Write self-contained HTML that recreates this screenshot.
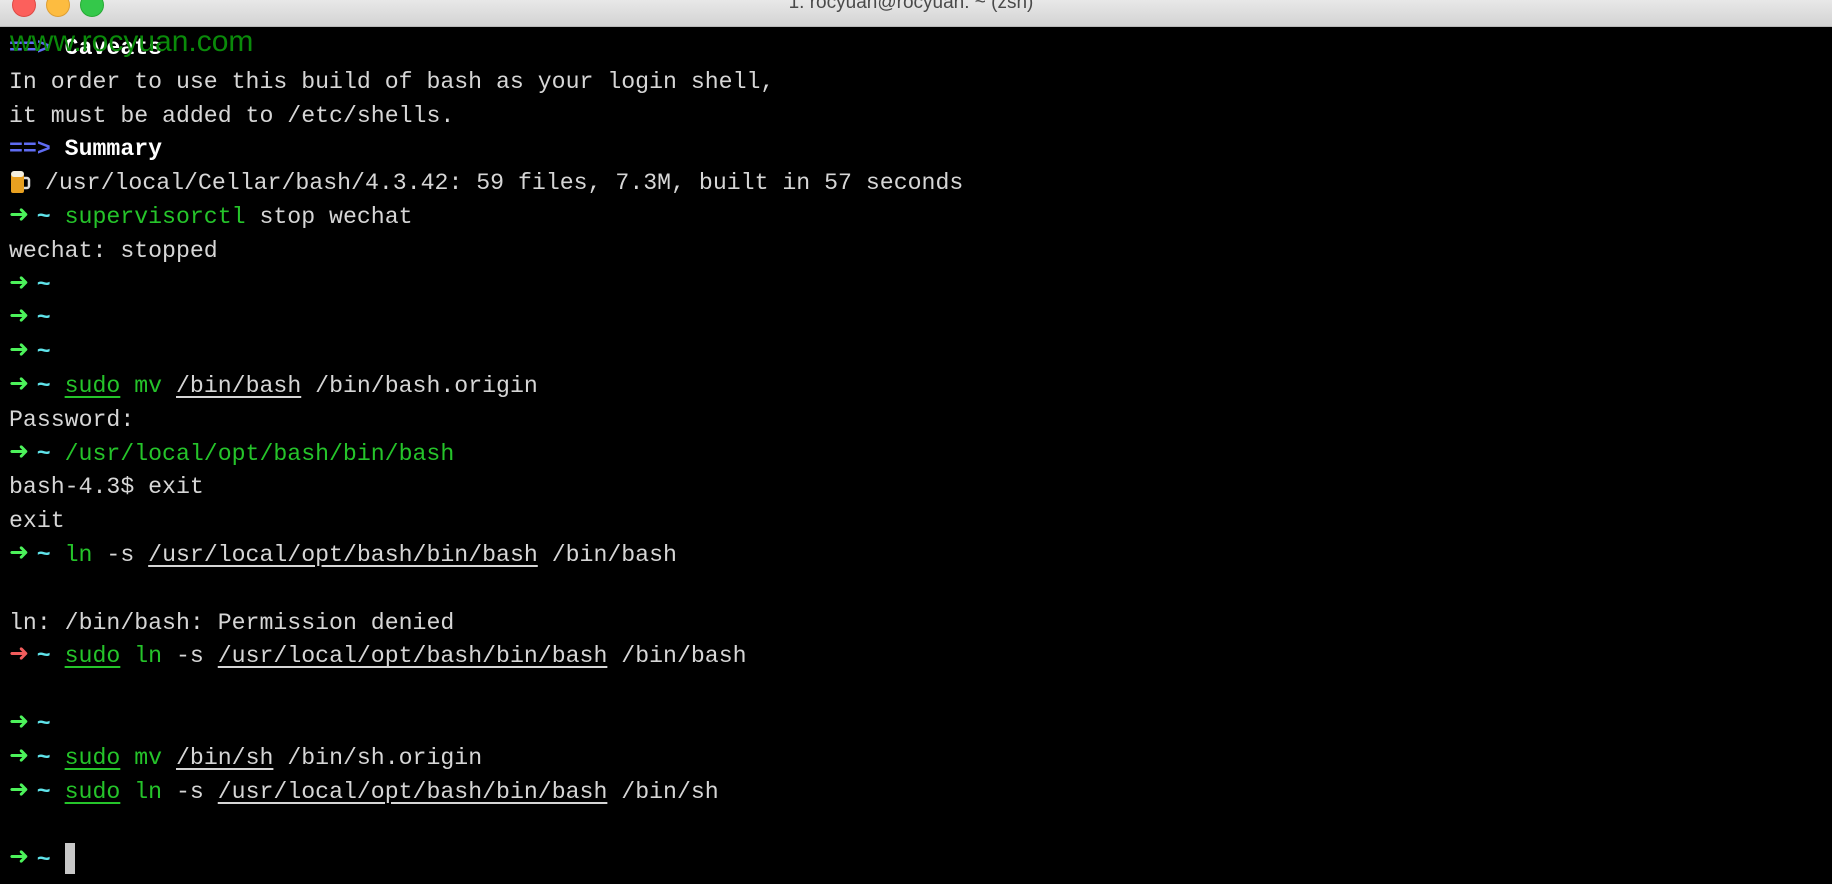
<!DOCTYPE html>
<html><head><meta charset="utf-8"><style>
html,body{margin:0;padding:0;background:#000;width:1832px;height:884px;overflow:hidden;}
.bar{position:absolute;left:0;top:0;width:1832px;height:26px;background:linear-gradient(#e8e8e8,#d3d3d3);border-bottom:1px solid #b8b8b8;overflow:hidden;}
.dot{position:absolute;top:-7px;width:22px;height:22px;border-radius:50%;}
.title{position:absolute;left:0;right:0;top:-8px;text-align:center;font:19px "Liberation Sans",sans-serif;color:#4a4a4a;padding-right:10px;}
.term{position:absolute;left:9px;top:32px;font-family:"Liberation Mono","DejaVu Sans Mono",monospace;font-size:23.2px;color:#d6d6d6;}
.l{height:33.8px;line-height:33.8px;white-space:pre;overflow:hidden;}
.a{display:inline-block;width:27.8px;height:33.8px;line-height:33.8px;vertical-align:top;position:relative;top:-3px;font-family:"DejaVu Sans",sans-serif;font-weight:bold;color:#4cf25a;font-size:24px;}
.r{color:#f25c5c;}
.t{color:#5fe3ea;font-weight:bold;}
.g{color:#25c42a;}
.u{text-decoration:underline;text-decoration-thickness:2px;text-underline-offset:4px;}
.b{color:#fff;font-weight:bold;}
.bl{color:#5f6cf2;font-weight:bold;}
.wm{position:absolute;left:10px;top:25px;font:30px "Liberation Sans",sans-serif;color:#0a8a0a;}
.cur{display:inline-block;width:10px;height:31px;background:#c8c8c8;vertical-align:-8px;}
</style></head><body>
<div class="bar">
<div class="dot" style="left:12px;background:#fc605c;border:1px solid #de4a45"></div>
<div class="dot" style="left:46px;background:#fdbc40;border:1px solid #de9f34"></div>
<div class="dot" style="left:80px;background:#34c84a;border:1px solid #27aa35"></div>
<div class="title">1. rocyuan@rocyuan: ~ (zsh)</div>
</div>
<div class="term"><div class="l"><span class="bl">==&gt;</span> <span class="b">Caveats</span></div><div class="l">In order to use this build of bash as your login shell,</div><div class="l">it must be added to /etc/shells.</div><div class="l"><span class="bl">==&gt;</span> <span class="b">Summary</span></div><div class="l"><svg width="22" height="26" viewBox="0 0 22 26" style="vertical-align:-5px"><rect x="2" y="6" width="13" height="19" rx="2" fill="#e8a020"/><rect x="2" y="3" width="13" height="6" rx="3" fill="#f4f0e0"/><path d="M15 10h3a2 2 0 0 1 2 2v6a2 2 0 0 1-2 2h-3" fill="none" stroke="#ddd" stroke-width="2.5"/></svg> /usr/local/Cellar/bash/4.3.42: 59 files, 7.3M, built in 57 seconds</div><div class="l"><span class="a">➜</span><span class="t">~</span> <span class="g">supervisorctl</span> stop wechat</div><div class="l">wechat: stopped</div><div class="l"><span class="a">➜</span><span class="t">~</span></div><div class="l"><span class="a">➜</span><span class="t">~</span></div><div class="l"><span class="a">➜</span><span class="t">~</span></div><div class="l"><span class="a">➜</span><span class="t">~</span> <span class="g u">sudo</span> <span class="g">mv</span> <span class="u">/bin/bash</span> /bin/bash.origin</div><div class="l">Password:</div><div class="l"><span class="a">➜</span><span class="t">~</span> <span class="g">/usr/local/opt/bash/bin/bash</span></div><div class="l">bash-4.3$ exit</div><div class="l">exit</div><div class="l"><span class="a">➜</span><span class="t">~</span> <span class="g">ln</span> -s <span class="u">/usr/local/opt/bash/bin/bash</span> /bin/bash</div><div class="l"></div><div class="l">ln: /bin/bash: Permission denied</div><div class="l"><span class="a r">➜</span><span class="t">~</span> <span class="g u">sudo</span> <span class="g">ln</span> -s <span class="u">/usr/local/opt/bash/bin/bash</span> /bin/bash</div><div class="l"></div><div class="l"><span class="a">➜</span><span class="t">~</span></div><div class="l"><span class="a">➜</span><span class="t">~</span> <span class="g u">sudo</span> <span class="g">mv</span> <span class="u">/bin/sh</span> /bin/sh.origin</div><div class="l"><span class="a">➜</span><span class="t">~</span> <span class="g u">sudo</span> <span class="g">ln</span> -s <span class="u">/usr/local/opt/bash/bin/bash</span> /bin/sh</div><div class="l"></div><div class="l"><span class="a">➜</span><span class="t">~</span> <span class="cur"></span></div></div>
<div class="wm">www.rocyuan.com</div>
</body></html>
